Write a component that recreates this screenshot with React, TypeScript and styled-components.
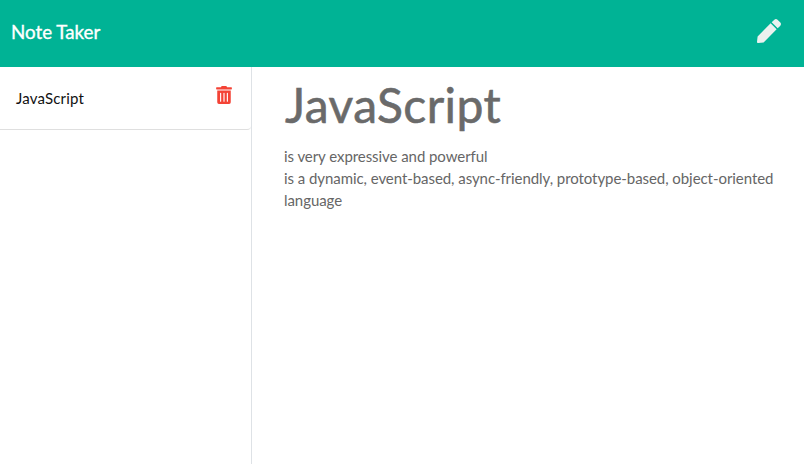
import React from "react";
import styled, { createGlobalStyle } from "styled-components";
import { FaPen, FaTrashAlt } from "react-icons/fa";

const GlobalStyle = createGlobalStyle`
  *, *::before, *::after { box-sizing: border-box; }
  body { margin: 0; background: #fff; color: #212529; font-family: Lato, sans-serif; font-size: 15px; line-height: 1.5; overflow: hidden; }
`;
const Page = styled.div`
  display: flex;
  flex-direction: column;
  height: 100vh;
`;
const Navbar = styled.header`
  display: flex;
  flex: 0 0 67px;
  justify-content: space-between;
  padding: 17px 23px 0 11px;
  background: #00b395;
`;
const Brand = styled.a`
  height: 30px;
  font-size: 18.75px;
  line-height: 30px;
  -webkit-text-stroke: 0.35px #fff;
  color: #fff;
`;
const IconButton = styled.button<{ $color: string; $size: number }>`
  display: flex;
  padding: 0;
  border: 0;
  background: none;
  color: ${(p) => p.$color};
  font-size: ${(p) => p.$size}px;
  height: ${(p) => p.$size}px;
`;
const NewNoteButton = styled(IconButton)`
  margin-top: 2px;
`;
const Main = styled.div`
  display: grid;
  grid-template-columns: 252px 1fr;
  flex: 1;
`;
const Sidebar = styled.aside`
  border-right: 1px solid #dee2e6;
`;
const NoteItem = styled.div`
  display: flex;
  justify-content: space-between;
  height: 63px;
  padding: 19px 18px 0 16px;
  border-bottom: 1px solid #dfdfdf;
  border-bottom-right-radius: 4px;
  color: #111;
`;
const NoteTitle = styled.span`
  padding-top: 1px;
  letter-spacing: 0.18px;
`;
const Note = styled.main`
  padding: 8px 28px 0 32px;
  color: #666;
`;
const Heading = styled.h1`
  margin: 0;
  padding-left: 1px;
  color: #6a6a6a;
  font-size: 48px;
  line-height: 60px;
  font-weight: 400;
  letter-spacing: 0.42px;
  -webkit-text-stroke: 0.6px #6a6a6a;
`;
const Body = styled.p`
  margin: 10px 0 0;
  line-height: 22px;
  letter-spacing: -0.06px;
  white-space: pre-line;
`;

export default function App() {
  return (
    <Page>
      <GlobalStyle />
      <Navbar>
        <Brand>Note Taker</Brand>
        <NewNoteButton $color="#ebf1ef" $size={24} aria-label="New note"><FaPen /></NewNoteButton>
      </Navbar>
      <Main>
        <Sidebar>
          <NoteItem>
            <NoteTitle>JavaScript</NoteTitle>
            <IconButton $color="#f44336" $size={18} aria-label="Delete note"><FaTrashAlt /></IconButton>
          </NoteItem>
        </Sidebar>
        <Note>
          <Heading>JavaScript</Heading>
          <Body>{"is very expressive and powerful\nis a dynamic, event-based, async-friendly, prototype-based, object-oriented language"}</Body>
        </Note>
      </Main>
    </Page>
  );
}
